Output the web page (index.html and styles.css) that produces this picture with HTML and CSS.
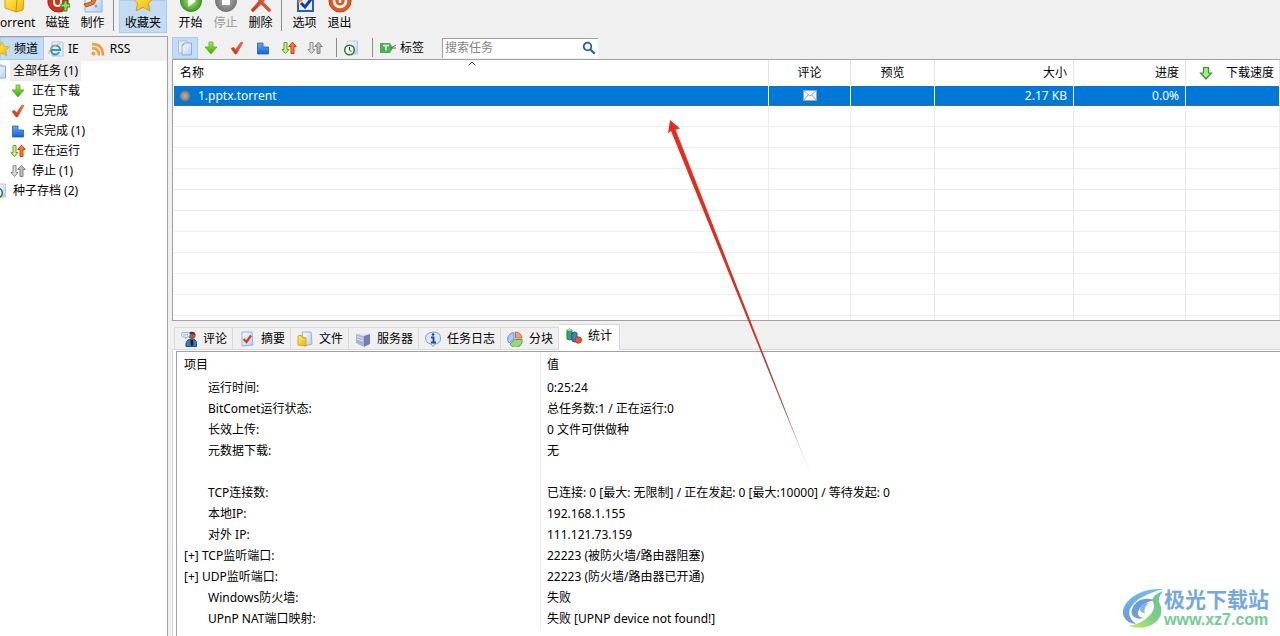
FILE: index.html
```html
<!DOCTYPE html>
<html lang="zh-CN">
<head>
<meta charset="utf-8">
<title>BitComet</title>
<link rel="stylesheet" href="styles.css">
</head>
<body>
<svg class="defs" aria-hidden="true">
  <defs>
    <linearGradient id="gGreen" x1="0" y1="0" x2="0" y2="1"><stop offset="0" stop-color="#b4f03a"/><stop offset="1" stop-color="#2fa80c"/></linearGradient>
    <linearGradient id="gYellow" x1="0" y1="0" x2="1" y2="1"><stop offset="0" stop-color="#fff36a"/><stop offset="1" stop-color="#f2b200"/></linearGradient>
    <linearGradient id="gPage" x1="0" y1="0" x2="1" y2="1"><stop offset="0" stop-color="#fdfeff"/><stop offset="1" stop-color="#b4cff5"/></linearGradient>
    <linearGradient id="gBlue" x1="0" y1="0" x2="0" y2="1"><stop offset="0" stop-color="#66aaf6"/><stop offset="1" stop-color="#1860d4"/></linearGradient>
    <linearGradient id="gRed" x1="1" y1="0" x2="0" y2="1"><stop offset="0" stop-color="#f4794a"/><stop offset="1" stop-color="#c72a10"/></linearGradient>
    <radialGradient id="gBall"><stop offset="0" stop-color="#a8f078"/><stop offset="1" stop-color="#3c9c24"/></radialGradient>
    <radialGradient id="gGray"><stop offset="0" stop-color="#b4b4b4"/><stop offset="1" stop-color="#777"/></radialGradient>
    <linearGradient id="gLogo" x1="0" y1="0" x2="0" y2="1"><stop offset="0" stop-color="#6dbfe8"/><stop offset="1" stop-color="#6e96d8"/></linearGradient>
    <linearGradient id="gLeaf" x1="1" y1="0" x2="0" y2="1"><stop offset="0" stop-color="#62c4a0"/><stop offset=".5" stop-color="#7dd080"/><stop offset="1" stop-color="#cdea70"/></linearGradient>
    <linearGradient id="gArrow" gradientUnits="userSpaceOnUse" x1="6" y1="10" x2="144" y2="357"><stop offset="0" stop-color="#ec2a1c"/><stop offset=".55" stop-color="#d03224"/><stop offset=".8" stop-color="#a84840"/><stop offset="1" stop-color="#c88880" stop-opacity=".3"/></linearGradient>
  </defs>
  <symbol id="down" viewBox="0 0 16 16"><path d="M6 2h4v5h4L8 14 2 7h4z" fill="url(#gGreen)" stroke="#5aa82a" stroke-width=".8"/></symbol>
  <symbol id="check" viewBox="0 0 16 16"><path d="M2 8.500l2.500-1.300 2 2.500L12 2l2 .7L7.500 14H6z" fill="url(#gRed)" stroke="#c8401c" stroke-width=".5"/></symbol>
  <symbol id="part" viewBox="0 0 16 16"><path d="M2.500 3h5.500v4h5.500v7h-11z" fill="url(#gBlue)" stroke="#1c60c0" stroke-width=".8"/></symbol>
  <symbol id="run" viewBox="0 0 16 16"><path d="M3 2.500h3v7h2l-3.500 4L1 9.500h2z" fill="#c8f088" stroke="#58a81c"/><path d="M10 13.500h3v-7h2.300L11.500 2.200 7.700 6.500H10z" fill="#fa7830" stroke="#d43c10"/></symbol>
  <symbol id="halt" viewBox="0 0 16 16"><path d="M3 2.500h3v7h2l-3.500 4L1 9.500h2z" fill="#ddd" stroke="#8a8a8a"/><path d="M10 13.500h3v-7h2.300L11.500 2.200 7.700 6.500H10z" fill="#bbb" stroke="#858585"/></symbol>
  <symbol id="pages" viewBox="0 0 16 16"><path d="M1.500 1h8l1 1v11h-9z" fill="#eaf2fd" stroke="#a4bfe6"/><path d="M7 3h7.500v12H5V5z" fill="url(#gPage)" stroke="#8fabda"/><path d="M5 5h2V3" fill="none" stroke="#8fabda"/></symbol>
  <symbol id="clock" viewBox="0 0 16 16"><path d="M5 1h9.500v13H4V2z" fill="url(#gPage)" stroke="#b4cbed"/><circle cx="6.500" cy="10" r="4.800" fill="#eef8e8" stroke="#34703a" stroke-width="1.500"/><path d="M6.500 7v3.200l2 1.500" fill="none" stroke="#333"/></symbol>
  <symbol id="star" viewBox="0 0 24 24"><path d="M12 1l3.300 7 7.700 1-5.600 5.300L19 22l-7-3.700L5 22l1.600-7.700L1 9l7.700-1z" fill="url(#gYellow)" stroke="#d99a10"/></symbol>
</svg>

<header class="toolbar">
  <button class="tool tool-first"><svg viewBox="0 0 24 24"><path d="M3 8l8-3 11 3-1 13-7 2L3 19z" fill="url(#gYellow)" stroke="#d39a14"/><path d="M14 23l1-13 7-2" fill="none" stroke="#c98d10"/></svg><span>orrent</span></button>
  <button class="tool"><svg viewBox="0 0 24 24"><path d="M2 3h20v12q-2 8-9 8-9 0-11-9z" fill="#d6301b" stroke="#a52010"/><path d="M8 3v10q0 4 4 4 3 0 3-4V3" fill="none" stroke="#fff" stroke-width="2"/><path d="M15 15h3v-3h3v3h3v3h-3v4h-3v-4h-3z" fill="#8be45b" stroke="#2d8a18"/></svg><span>磁链</span></button>
  <button class="tool"><svg viewBox="0 0 24 24"><path d="M4 3h17v20H4z" fill="url(#gPage)" stroke="#8bb0df"/><path d="M3 15l7-2 2-6 4 2-3 6-8 3z" fill="#ee7a28" stroke="#c44b12"/><circle cx="15" cy="17" r="1.500" fill="#7da7df"/></svg><span>制作</span></button>
  <span class="sep"></span>
  <button class="tool tool-wide active"><svg><use href="#star"/></svg><span>收藏夹</span></button>
  <button class="tool"><svg viewBox="0 0 24 24"><circle cx="12" cy="12" r="10.500" fill="url(#gBall)" stroke="#388a28"/><path d="M9 6l8 6-8 6z" fill="#fff"/></svg><span>开始</span></button>
  <button class="tool" disabled><svg viewBox="0 0 24 24"><circle cx="12" cy="12" r="10.500" fill="url(#gGray)" stroke="#777"/><path d="M8 7h8v9H8z" fill="#fff"/></svg><span>停止</span></button>
  <button class="tool"><svg viewBox="0 0 24 24"><path d="M3 3l3-1 6 8 7-8 2 1-7 10 8 8-2 2-8-8-8 8-2-2 8-9z" fill="url(#gRed)" stroke="#c84a20" stroke-width=".6"/></svg><span>删除</span></button>
  <span class="sep"></span>
  <button class="tool"><svg viewBox="0 0 24 24"><path d="M5 2h15v20H5z" fill="#e3efff" stroke="#2860b8" stroke-width="2"/><path d="M8 14l4 4 7-9" fill="none" stroke="#173e96" stroke-width="3"/><path d="M5 13l4-2" stroke="#ed8d42" stroke-width="2"/></svg><span>选项</span></button>
  <button class="tool"><svg viewBox="0 0 24 24"><circle cx="12" cy="12" r="11" fill="#e45a24" stroke="#ba3d10"/><circle cx="12" cy="12" r="6" fill="none" stroke="#fff" stroke-width="2.500"/><path d="M12 3v11" stroke="#e45a24" stroke-width="6"/><path d="M12 4v10" stroke="#fff" stroke-width="2.500"/></svg><span>退出</span></button>
</header>

<div class="body">
  <aside class="side">
    <nav class="side-tabs">
      <button class="side-tab active"><svg class="icon"><use href="#star"/></svg>频道</button>
      <button class="side-tab"><svg class="icon" viewBox="0 0 16 16"><path d="M4 1h10l1 1v13H4z" fill="#edf4fd" stroke="#a9c3e6"/><path d="M11 11q-1 2.500-3.500 2.500A4.500 4.500 0 1 1 12 9H4" fill="none" stroke="#2d94d6" stroke-width="2"/><path d="M1 13q-1-4 5-8 5-3 7-2" fill="none" stroke="#e8bb45"/></svg>IE</button>
      <button class="side-tab rss"><svg class="icon" viewBox="0 0 16 16"><circle cx="3.500" cy="12.500" r="2" fill="#f79a3b"/><path d="M2 7q7 0 7 7.500M2 3q11 0 11 11.500" fill="none" stroke="#f79a3b" stroke-width="2.500"/></svg>RSS</button>
    </nav>
    <ul class="tree">
      <li class="root"><svg class="icon"><use href="#pages"/></svg><span class="current">全部任务 (1)</span></li>
      <li><svg class="icon"><use href="#down"/></svg>正在下载</li>
      <li><svg class="icon"><use href="#check"/></svg>已完成</li>
      <li><svg class="icon"><use href="#part"/></svg>未完成 (1)</li>
      <li><svg class="icon"><use href="#run"/></svg>正在运行</li>
      <li><svg class="icon"><use href="#halt"/></svg>停止 (1)</li>
      <li class="root"><svg class="icon"><use href="#clock"/></svg><span>种子存档 (2)</span></li>
    </ul>
  </aside>

  <main class="main">
    <div class="filters">
      <button class="filter active" aria-label="全部任务"><svg class="icon"><use href="#pages"/></svg></button>
      <button class="filter" aria-label="正在下载"><svg class="icon"><use href="#down"/></svg></button>
      <button class="filter" aria-label="已完成"><svg class="icon"><use href="#check"/></svg></button>
      <button class="filter" aria-label="未完成"><svg class="icon"><use href="#part"/></svg></button>
      <button class="filter" aria-label="正在运行"><svg class="icon"><use href="#run"/></svg></button>
      <button class="filter" aria-label="停止"><svg class="icon"><use href="#halt"/></svg></button>
      <span class="sep sep-small"></span>
      <button class="filter" aria-label="种子存档"><svg class="icon"><use href="#clock"/></svg></button>
      <span class="sep sep-small"></span>
      <button class="tag"><svg class="icon" viewBox="0 0 16 16"><path d="M0 3h10l3 5-3 5H0z" fill="#4caf50"/><path d="M3 5.500h6M6 5.500v5" stroke="#fff" stroke-width="1.300"/><path d="M11 8l5-3M11 8h5" stroke="#666" fill="none"/></svg>标签</button>
      <div class="search">
        <input type="text" placeholder="搜索任务" aria-label="搜索任务">
        <svg class="glass" viewBox="0 0 14 14"><circle cx="5.500" cy="5.500" r="3.800" fill="none" stroke="#2c5f9e" stroke-width="1.800"/><path d="M8.500 8.500l4.200 4.200" stroke="#2c5f9e" stroke-width="2.200"/></svg>
      </div>
    </div>

    <section class="tasks">
      <svg class="sort" viewBox="0 0 8 5"><path d="M.5 4.500L4 1l3.500 3.500" fill="none" stroke="#555"/></svg>
      <table class="grid">
        <colgroup><col><col class="c-comment"><col class="c-preview"><col class="c-size"><col class="c-progress"><col class="c-speed"></colgroup>
        <thead><tr><th>名称</th><th class="mid">评论</th><th class="mid">预览</th><th class="num">大小</th><th class="num">进度</th><th class="num"><span class="speed"><svg class="icon" viewBox="0 0 16 16"><path d="M5.500 2.500h5V8h3L8 14 2.500 8h3z" fill="#a8e890" stroke="#38962c" stroke-width="1.200"/></svg>下载速度</span></th></tr></thead>
        <tbody>
          <tr class="selected"><td><span class="name"><svg class="dot" viewBox="0 0 12 12"><circle cx="6" cy="6" r="5.500" fill="url(#gGray)" stroke="#666"/></svg>1.pptx.torrent</span></td><td class="mid"><svg class="mail" viewBox="0 0 14 11"><path d="M.5.500h13v10H.5z" fill="#f5f5f5" stroke="#9aa7b5"/><path d="M1 1l6 5 6-5M1 10l4-5M13 10L9 5" fill="none" stroke="#a8a8a8"/></svg></td><td></td><td class="num">2.17 KB</td><td class="num">0.0%</td><td></td></tr>
          <tr><td></td><td></td><td></td><td></td><td></td><td></td></tr>
          <tr><td></td><td></td><td></td><td></td><td></td><td></td></tr>
          <tr><td></td><td></td><td></td><td></td><td></td><td></td></tr>
          <tr><td></td><td></td><td></td><td></td><td></td><td></td></tr>
          <tr><td></td><td></td><td></td><td></td><td></td><td></td></tr>
          <tr><td></td><td></td><td></td><td></td><td></td><td></td></tr>
          <tr><td></td><td></td><td></td><td></td><td></td><td></td></tr>
          <tr><td></td><td></td><td></td><td></td><td></td><td></td></tr>
          <tr><td></td><td></td><td></td><td></td><td></td><td></td></tr>
          <tr><td></td><td></td><td></td><td></td><td></td><td></td></tr>
          <tr class="last"><td></td><td></td><td></td><td></td><td></td><td></td></tr>
        </tbody>
      </table>
    </section>

    <nav class="tabs">
      <button class="tab"><svg class="icon" viewBox="0 0 16 16"><circle cx="11" cy="4.500" r="3.500" fill="#a8593d"/><path d="M7.500 4Q8 .500 11 .800q3.500.2 3.500 4L13 3z" fill="#5a3020"/><path d="M5 15.500V12q1-4 5.500-4 5 0 5 4.500v3z" fill="#3a80b8" stroke="#1d4c80"/><path d="M9.500 9h2.500l.5 5-1.500 1-1.500-1z" fill="#223"/><path d="M2.500 1.500H7q2 0 2 2t-2 2.500H6L4.500 8V6H2.500q-2 0-2-2.500t2-2z" fill="#eaf3fd" stroke="#7f9fca" stroke-width=".8"/><path d="M2.500 3.800h4.500" stroke="#4a74b0" stroke-dasharray="1 .8"/></svg>评论</button>
      <button class="tab"><svg class="icon" viewBox="0 0 16 16"><path d="M3 1h10l1 13-11 1z" fill="url(#gPage)" stroke="#94b2dd"/><path d="M4.500 8l3 3L12 4.500" fill="none" stroke="#d83a18" stroke-width="2.200"/></svg>摘要</button>
      <button class="tab"><svg class="icon" viewBox="0 0 16 16"><path d="M5 1h9l1 12-8 2z" fill="url(#gPage)" stroke="#8fb0e0"/><path d="M1 5l3-1 1 2 4 1v8l-8-1z" fill="url(#gYellow)" stroke="#d5a32a"/></svg>文件</button>
      <button class="tab"><svg class="icon" viewBox="0 0 16 16"><path d="M1 3l8-2 6 2-6 2z" fill="#e6e9f6"/><path d="M1 3l8 2v11l-8-4z" fill="#aab2d6"/><path d="M9 5l6-2v10l-6 3z" fill="#747eb4"/><path d="M2 5.500l6 2M2 8l6 2" stroke="#dfe4f6"/></svg>服务器</button>
      <button class="tab"><svg class="icon" viewBox="0 0 16 16"><path d="M8 1q7.500 0 7.500 6T10 13l-2 2.500L6 13Q.5 12 .5 7T8 1z" fill="#d9e8fa" stroke="#7e9fca"/><path d="M6 6.500h2.500V11M6 11.500h5" fill="none" stroke="#17489c" stroke-width="1.800"/><circle cx="8" cy="3.500" r="1.300" fill="#17489c"/></svg>任务日志</button>
      <button class="tab"><svg class="icon" viewBox="0 0 16 16"><path d="M7 8V1.500A6.500 6.500 0 0 0 2 12z" fill="#a9cdf3" stroke="#5a96d4"/><path d="M8.500 7V1A6.500 6.500 0 0 1 15 7z" fill="#f49b80" stroke="#df6241"/><path d="M8 8.500h7A6.500 6.500 0 0 1 3 13z" fill="#9ad67a" stroke="#57a83c"/></svg>分块</button>
      <button class="tab active"><svg class="icon" viewBox="0 0 16 16"><path d="M1 2q2.500-2 5 0v9q-2.500 2-5 0z" fill="#2faa62" stroke="#16824a"/><ellipse cx="3.500" cy="2" rx="2.500" ry="1" fill="#9be5b4"/><path d="M6 5q2.500-2 5 0v8q-2.500 2-5 0z" fill="#3d80da" stroke="#2055ac"/><circle cx="12.300" cy="12" r="3.200" fill="#e85a2c" stroke="#b93b14"/></svg>统计</button>
    </nav>

    <div class="pane">
      <section class="stats">
        <table class="details">
          <colgroup><col class="c-item"><col></colgroup>
          <thead><tr><th>项目</th><th>值</th></tr></thead>
          <tbody>
            <tr><td class="sub">运行时间:</td><td>0:25:24</td></tr>
            <tr><td class="sub">BitComet运行状态:</td><td>总任务数:1 / 正在运行:0</td></tr>
            <tr><td class="sub">长效上传:</td><td>0 文件可供做种</td></tr>
            <tr><td class="sub">元数据下载:</td><td>无</td></tr>
            <tr><td></td><td></td></tr>
            <tr><td class="sub">TCP连接数:</td><td>已连接: 0 [最大: 无限制] / 正在发起: 0 [最大:10000] / 等待发起: 0</td></tr>
            <tr><td class="sub">本地IP:</td><td>192.168.1.155</td></tr>
            <tr><td class="sub">对外 IP:</td><td>111.121.73.159</td></tr>
            <tr><td>[+] TCP监听端口:</td><td>22223 (被防火墙/路由器阻塞)</td></tr>
            <tr><td>[+] UDP监听端口:</td><td>22223 (防火墙/路由器已开通)</td></tr>
            <tr><td class="sub">Windows防火墙:</td><td>失败</td></tr>
            <tr><td class="sub">UPnP NAT端口映射:</td><td>失败 [UPNP device not found!]</td></tr>
          </tbody>
        </table>
      </section>
    </div>
  </main>
</div>

<svg class="pointer" viewBox="0 0 150 362" aria-hidden="true"><path d="M4 0L14 8.500 9.500 9.500 146 358 5 11 2 13.500z" fill="url(#gArrow)"/></svg>

<div class="brand">
  <svg viewBox="5 4 44 42" aria-hidden="true">
    <path d="M47 6Q26 5 14 15 3 25 7 34q3 6 12 7Q10 34 13 26 19 13 47 6z" fill="url(#gLogo)"/>
    <path d="M37 17Q24 13 17 22q-5 8 0 12 5 3 9 1-6-1-5-6 3-9 16-12z" fill="#6c9cdb"/>
    <path d="M32 20q-8 0-9 6 0 4 5 4-2-5 4-10z" fill="#82b4e4"/>
    <path d="M46 8Q37 11 35 17q5 7-2 15-8 9-22 11 17 5 28-4 9-9 3-20-1-5 4-11z" fill="url(#gLeaf)"/>
  </svg>
  <div class="brand-text"><span class="brand-name">极光下载站</span><span class="brand-url">www.xz7.com</span></div>
</div>
</body>
</html>
```

FILE: styles.css
```css
* { box-sizing: border-box; }

body {
  margin: 0;
  height: 100vh;
  overflow: hidden;
  display: flex;
  flex-direction: column;
  position: relative;
  background: #f0f0f0;
  color: #000;
  font: 12px/16px "Noto Sans", "Noto Sans CJK SC", sans-serif;
}

button {
  font: inherit;
  color: inherit;
  background: none;
  border: 0;
  padding: 0;
  white-space: nowrap;
}

svg { display: block; flex: none; }
.defs { position: absolute; width: 0; height: 0; }
.icon { width: 16px; height: 16px; }

/* Main toolbar */
.toolbar { display: flex; height: 36px; flex: none; overflow: hidden; }
.tool {
  width: 35px;
  height: 33px;
  flex: none;
  display: flex;
  flex-direction: column;
  align-items: center;
  justify-content: flex-end;
  padding-bottom: 2px;
}
.tool svg { width: 24px; height: 24px; margin-bottom: 2px; }
.tool:disabled { color: #999; }
.tool-first { width: 40px; align-items: flex-start; }
.tool-first svg { margin-left: 2px; }
.tool-wide { width: 48px; margin-right: 6px; }
.active { background: #c2dcf3; box-shadow: inset 0 0 0 1px #a6cdee; }
.sep { width: 1px; height: 31px; margin: 0 5px 0 3px; background: #8c8c8c; }

/* Left panel */
.body { display: flex; flex: 1; min-height: 0; }
.side {
  width: 168px;
  flex: none;
  margin-right: 4px;
  background: #fff;
  border-top: 1px solid #a0a0a8;
  border-right: 1px solid #a0a0a8;
}
.side-tabs { display: flex; height: 24px; background: #f0f0f0; }
.side-tab { display: flex; align-items: center; gap: 4px; height: 23px; padding: 0 6px 0 4px; }
.side-tab:first-child { width: 44px; justify-content: flex-end; }
.rss { padding-left: 5px; }
.tree { margin: 0; padding: 0; list-style: none; overflow: hidden; }
.tree li { display: flex; align-items: center; gap: 6px; height: 20px; padding-left: 10px; }
.tree .root { gap: 3px; padding: 0; }
.root .icon { margin-left: -9px; }
.root span { padding: 2px 3px; }
.current { background: #ececec; }

/* Filter bar */
.main { flex: 1; min-width: 0; display: flex; flex-direction: column; }
.filters { display: flex; height: 23px; flex: none; align-items: center; }
.filter { width: 26px; height: 22px; display: grid; place-items: center; }
.filters .sep-small { height: 19px; margin: 0 1px 0 8px; }
.tag { display: flex; align-items: center; gap: 4px; margin: 0 18px 0 6px; }
.search {
  display: flex;
  align-items: center;
  width: 156px;
  height: 20px;
  padding-right: 2px;
  background: #fff;
  border: solid #a0a0a0;
  border-width: 1px 0 0 1px;
}
.search input {
  flex: 1;
  min-width: 0;
  padding: 0 2px;
  border: 0;
  outline: 0;
  background: none;
  font: inherit;
}
.search input::placeholder { color: #858585; opacity: 1; }
.glass { width: 14px; height: 14px; }

/* Task list */
.tasks {
  position: relative;
  flex: none;
  padding-left: 1px;
  background: #fff;
  border: solid #a0a0a0;
  border-width: 1px 0 1px 1px;
}
.sort { position: absolute; left: 295px; top: 1px; width: 8px; height: 5px; }
table { width: 100%; table-layout: fixed; border-collapse: separate; border-spacing: 0; }
th { font-weight: 400; text-align: left; }
td, th { white-space: nowrap; overflow: hidden; }
.c-comment { width: 82px; }
.c-preview { width: 84px; }
.c-size { width: 139px; }
.c-progress { width: 112px; }
.c-speed { width: 94px; }
.grid th { height: 26px; padding: 0 6px; border-right: 1px solid #e4e4e4; }
.grid td { height: 21px; padding: 0 6px; border: solid #ececec; border-width: 0 1px 1px 0; }
.grid .mid { text-align: center; }
.grid .num { text-align: right; }
.grid .selected td { height: 20px; color: #fff; background: #0078d7; border-right-color: #fff; border-bottom: 1px dotted #8a6440; }
.grid .last td { height: 4px; border-bottom: 0; }
.speed { display: flex; justify-content: space-between; align-items: center; margin: 0 -1px 0 6px; }
.name { display: flex; align-items: center; gap: 7px; margin-left: -1px; }
.dot { width: 12px; height: 12px; }
.mail { width: 14px; height: 11px; margin: 0 auto; }

/* Detail tabs */
.tabs {
  display: flex;
  align-items: flex-end;
  height: 28px;
  flex: none;
  padding-left: 2px;
}
.tab {
  display: flex;
  align-items: center;
  gap: 6px;
  height: 22px;
  padding: 0 5px 0 6px;
  border: solid #d9d9d9;
  border-width: 1px 1px 0 0;
}
.tab:first-child { border-left-width: 1px; }
.tab.active { height: 26px; margin-bottom: -1px; padding: 0 7px 3px; background: #fff; box-shadow: none; }

/* Statistics */
.pane {
  flex: 1;
  min-height: 0;
  display: flex;
  padding: 1px 0 0 3px;
  background: #fff;
  border: solid #d9d9d9;
  border-width: 1px 0 0 1px;
}
.tabs { position: relative; z-index: 1; }
.stats {
  flex: 1;
  min-width: 0;
  overflow: hidden;
  border: solid #a0a0a0;
  border-width: 1px 0 0 1px;
}
.c-item { width: 364px; }
.details th { height: 25px; }
.details td { height: 21px; }
.details th, .details td { padding: 0 7px; }
.details th:first-child, .details td:first-child { border-right: 1px solid #ececec; }
.details th + th, .details td + td { padding-left: 6px; }
.details .sub { padding-left: 31px; }

/* Overlays */
.pointer { position: absolute; left: 666px; top: 120px; width: 150px; height: 362px; pointer-events: none; }
.brand { position: absolute; right: 11px; bottom: 6px; display: flex; align-items: center; }
.brand svg { width: 44px; height: 42px; margin-right: -2px; }
.brand-text { display: flex; flex-direction: column; }
.brand-name { color: #74a9df; font: 700 21px/24px "Noto Sans CJK SC", sans-serif; }
.brand-url { color: #74cc94; font: 700 16px/20px "Liberation Sans", sans-serif; }
```
